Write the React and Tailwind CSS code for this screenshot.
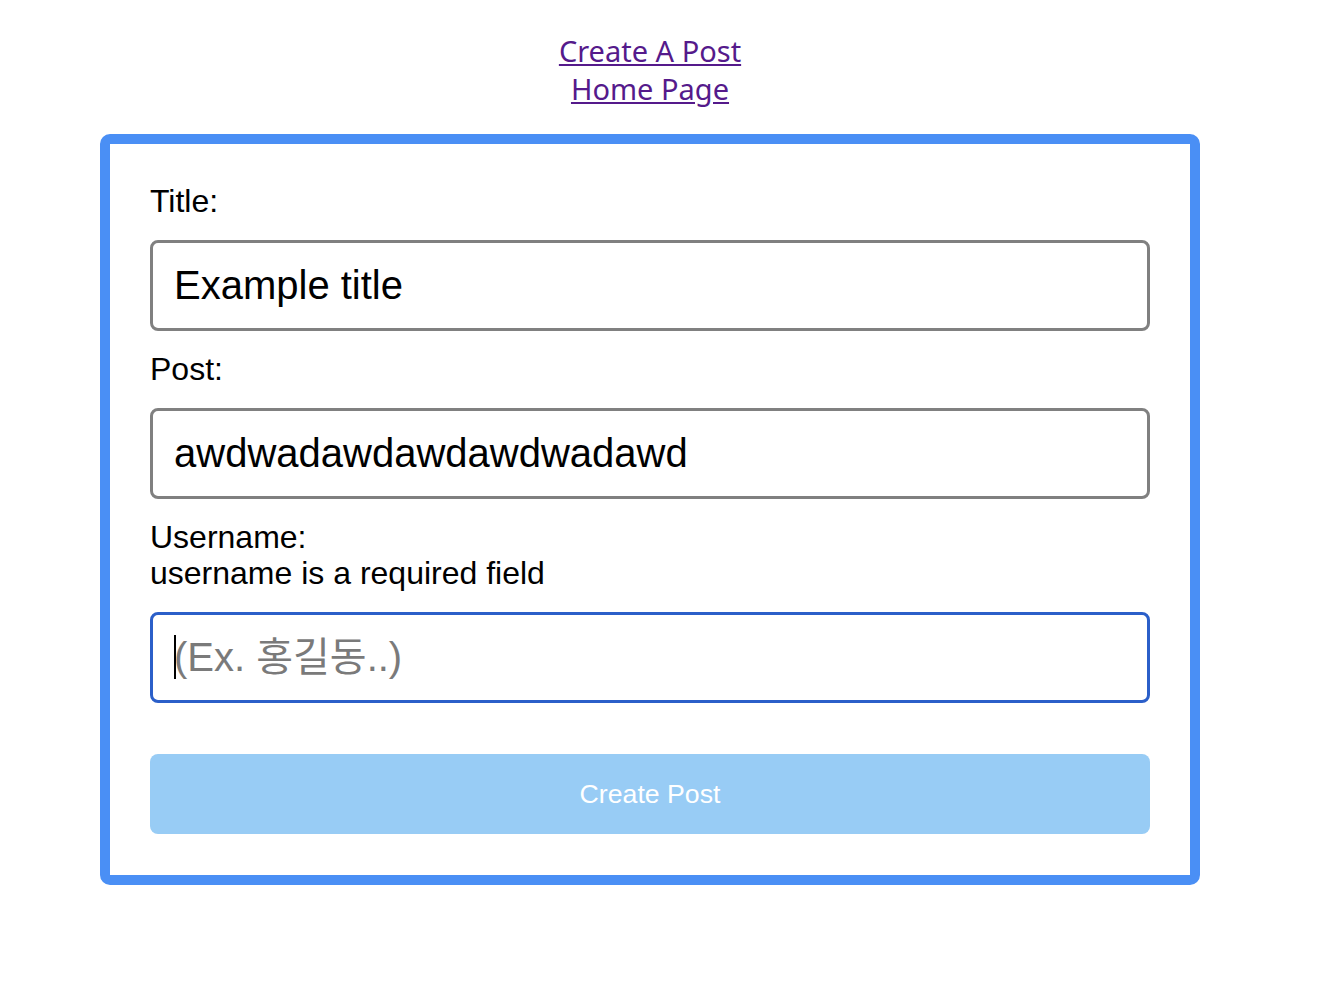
import React from "react";

export default function App() {
  const sans = { fontFamily: '"Liberation Sans", "Noto Sans CJK KR", Arial, sans-serif' };
  return (
    <div className="w-[1300px] bg-white pt-[32px] pb-[100px]" style={sans}>
      <div className="flex flex-col items-center" style={{ fontFamily: '"Noto Sans", sans-serif' }}>
        <a href="#" className="text-[29px] leading-[38px] text-[#551a8b] underline">Create A Post</a>
        <a href="#" className="text-[29px] leading-[38px] text-[#551a8b] underline">Home Page</a>
      </div>
      <div className="mx-auto mt-[26px] w-[1100px] rounded-[10px] border-[10px] border-[#4a8ff5] px-[40px] pt-[39px] pb-[41px]">
        <div className="text-[32px] leading-[37px] text-black">Title:</div>
        <input
          readOnly
          value="Example title"
          className="mt-[20px] block h-[91px] w-full rounded-[8px] border-[3px] border-[#808080] pl-[21px] text-[40px] text-black outline-none"
          style={sans}
        />
        <div className="mt-[20px] text-[32px] leading-[37px] text-black">Post:</div>
        <input
          readOnly
          value="awdwadawdawdawdwadawd"
          className="mt-[20px] block h-[91px] w-full rounded-[8px] border-[3px] border-[#808080] pl-[21px] text-[40px] text-black outline-none"
          style={sans}
        />
        <div className="mt-[20px] text-[32px] leading-[36px] text-black">
          <div>Username:</div>
          <div>username is a required field</div>
        </div>
        <div className="relative mt-[21px]">
          <input
            readOnly
            placeholder="(Ex. 홍길동..)"
            className="block h-[91px] w-full rounded-[8px] border-[3px] border-[#2b5fc9] pl-[21px] text-[40px] text-black outline-none placeholder:text-[#7a7a7a]"
            style={sans}
          />
          <div className="absolute left-[24px] top-[23px] h-[44px] w-[2px] bg-black" />
        </div>
        <button
          className="mt-[51px] block h-[80px] w-full rounded-[8px] bg-[#98ccf5] text-[26.67px] text-white"
          style={sans}
        >
          Create Post
        </button>
      </div>
    </div>
  );
}
